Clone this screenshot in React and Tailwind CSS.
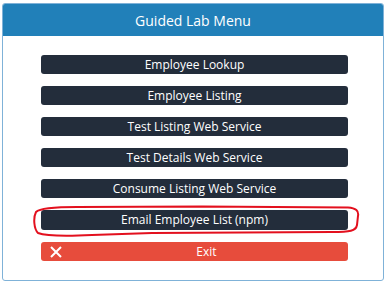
import React from 'react';

const items = [
  'Employee Lookup',
  'Employee Listing',
  'Test Listing Web Service',
  'Test Details Web Service',
  'Consume Listing Web Service',
];

function MenuButton({ label }) {
  return (
    <button className="block h-[19px] w-full rounded-[3px] bg-[#232d3b] text-[12px] leading-none text-white">
      {label}
    </button>
  );
}

export default function App() {
  return (
    <div className="h-[284px] w-[386px] bg-white pl-[2px] pr-[2px] pt-[3px]" style={{ fontFamily: '"Open Sans", "Liberation Sans", sans-serif' }}>
      <div className="h-[278px] overflow-hidden rounded-[3px] border border-[#7fb2d8]">
        <div className="flex h-[32px] items-center justify-center bg-[#2180b9] text-[14px] text-white">
          Guided Lab Menu
        </div>
        <div className="flex flex-col gap-[12px] pl-[38px] pr-[35px] pt-[19px]">
          {items.map((label) => (
            <MenuButton key={label} label={label} />
          ))}
          <div className="relative">
            <button className="block h-[20px] w-full rounded-[3px] bg-[#232d3b] text-[12px] leading-none text-white">
              Email Employee List (npm)
            </button>
            <svg className="pointer-events-none absolute left-[-9px] top-[-6px]" width="330" height="34" viewBox="0 0 330 34" fill="none">
              <path
                d="M170 2.5 L316 3.5 C324 4 327 7 326 12 L325 21 C324 27 318 28 300 28 L120 29 L60 31 C40 32 14 32 6 29 C2 25 1 14 4 8 C8 4 22 3 45 3 Z"
                stroke="#e3101e"
                strokeWidth="2"
              />
            </svg>
          </div>
          <button className="relative flex h-[19px] w-full items-center rounded-[3px] bg-[#e74c3c] text-[12px] leading-none text-white">
            <svg className="absolute left-[9px]" width="12" height="12" viewBox="0 0 12 12">
              <path d="M1 1 L11 11 M11 1 L1 11" stroke="white" strokeWidth="2" />
            </svg>
            <span className="w-full pl-[24px] text-center">Exit</span>
          </button>
        </div>
      </div>
    </div>
  );
}
